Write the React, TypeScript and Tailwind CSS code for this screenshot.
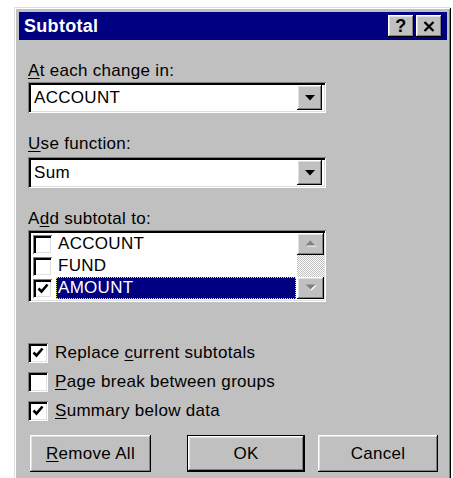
import React from "react";

// Win95-style bevels
const raised =
  "shadow-[inset_-1px_-1px_#000,inset_1px_1px_#fff,inset_-2px_-2px_#808080,inset_2px_2px_#dfdfdf]";
const sunken =
  "shadow-[inset_1px_1px_#808080,inset_-1px_-1px_#fff,inset_3px_3px_#000,inset_-2px_-2px_#dfdfdf]";

function Key({ children }: { children: React.ReactNode }) {
  return <span className="underline underline-offset-2 decoration-1">{children}</span>;
}

function Check({ checked, size }: { checked: boolean; size: string }) {
  return (
    <div className={`${size} shrink-0 bg-white ${sunken} flex items-center justify-center`}>
      {checked && (
        <svg width="12" height="11" viewBox="0 0 12 11">
          <path d="M1.5 5.5 L4.5 8.5 L10.5 1.5" fill="none" stroke="#000" strokeWidth="2.6" />
        </svg>
      )}
    </div>
  );
}

function Combo({ value }: { value: string }) {
  return (
    <div className={`h-[31px] w-[298px] bg-white ${sunken} flex items-center pl-[6px] pr-[4px]`}>
      <span className="flex-1">{value}</span>
      <div className={`h-[25px] w-[25px] bg-[#c0c0c0] ${raised} flex items-center justify-center`}>
        <svg width="10" height="6" viewBox="0 0 10 6">
          <polygon points="0,0 10,0 5,5.5" fill="#000" />
        </svg>
      </div>
    </div>
  );
}

function ScrollArrow({ up }: { up: boolean }) {
  return (
    <div className={`h-[22px] w-[27px] bg-[#c0c0c0] ${raised} flex items-center justify-center`}>
      <svg width="12" height="8" viewBox="0 0 12 8">
        {up ? (
          <>
            <polygon points="1.5,6.5 11.5,6.5 6.5,1.5" fill="#fff" />
            <polygon points="0.5,5.5 10.5,5.5 5.5,0.5" fill="#808080" />
          </>
        ) : (
          <>
            <polygon points="1.5,1.5 11.5,1.5 6.5,6.5" fill="#fff" />
            <polygon points="0.5,0.5 10.5,0.5 5.5,5.5" fill="#808080" />
          </>
        )}
      </svg>
    </div>
  );
}

const fields = [
  { name: "ACCOUNT", checked: false },
  { name: "FUND", checked: false },
  { name: "AMOUNT", checked: true },
];

export default function App() {
  return (
    <div className="h-[478px] w-[453px] overflow-hidden bg-white pl-[14px] pt-[7px] font-['Liberation_Sans',Arial,sans-serif] text-[17px] leading-[20px] tracking-[0.3px] text-black">
      <div className="h-[490px] w-[437px] bg-[#c0c0c0] pt-[5px] pl-[5px] pr-[4px] shadow-[inset_1px_1px_#dfdfdf,inset_-1px_-1px_#000,inset_2px_2px_#fff,inset_-2px_-2px_#808080]">
        {/* title bar */}
        <div className="h-[28px] bg-[#000080] flex items-center pl-[5px] pr-[5px]">
          <span className="flex-1 text-white font-bold text-[18px]">Subtotal</span>
          <div className={`h-[22px] w-[26px] bg-[#c0c0c0] ${raised} flex items-center justify-center font-bold text-[18px]`}>
            ?
          </div>
          <div className={`ml-[2px] h-[22px] w-[26px] bg-[#c0c0c0] ${raised} flex items-center justify-center`}>
            <svg width="12" height="11" viewBox="0 0 12 11">
              <path d="M1.5 1 L10.5 10 M10.5 1 L1.5 10" stroke="#000" strokeWidth="2.2" />
            </svg>
          </div>
        </div>

        <div className="pl-[9px] flex flex-col">
          <div className="mt-[21px]">
            <Key>A</Key>t each change in:
          </div>
          <div className="mt-[1px]">
            <Combo value="ACCOUNT" />
          </div>

          <div className="mt-[21px]">
            <Key>U</Key>se function:
          </div>
          <div className="mt-[3px]">
            <Combo value="Sum" />
          </div>

          <div className="mt-[21px]">
            A<Key>d</Key>d subtotal to:
          </div>
          <div className={`mt-[1px] h-[72px] w-[298px] bg-white ${sunken} flex py-[3px] pl-[3px] pr-[2px]`}>
            <div className="flex-1 flex flex-col">
              {fields.map((f) => (
                <div key={f.name} className="h-[22px] flex items-center">
                  <div className="ml-[2px]">
                    <Check checked={f.checked} size="h-[19px] w-[19px]" />
                  </div>
                  {f.checked ? (
                    <span className="ml-[4px] mr-[1px] h-[22px] flex-1 flex items-center pl-[1px] bg-[#000080] text-white border border-dotted border-[#e8e060]">
                      {f.name}
                    </span>
                  ) : (
                    <span className="ml-[6px]">{f.name}</span>
                  )}
                </div>
              ))}
            </div>
            <div className="w-[27px] flex flex-col">
              <ScrollArrow up />
              <div className="h-[22px] bg-[repeating-conic-gradient(#fff_0_25%,#c0c0c0_0_50%)] bg-[length:2px_2px]" />
              <ScrollArrow up={false} />
            </div>
          </div>

          <div className="mt-[36px] flex flex-col">
            <div className="h-[29px] flex items-center gap-[7px]">
              <Check checked size="h-[20px] w-[20px]" />
              <span>
                Replace <Key>c</Key>urrent subtotals
              </span>
            </div>
            <div className="h-[29px] flex items-center gap-[7px]">
              <Check checked={false} size="h-[20px] w-[20px]" />
              <span>
                <Key>P</Key>age break between groups
              </span>
            </div>
            <div className="h-[29px] flex items-center gap-[7px]">
              <Check checked size="h-[20px] w-[20px]" />
              <span>
                <Key>S</Key>ummary below data
              </span>
            </div>
          </div>

          <div className="mt-[10px] flex">
            <button className={`ml-[2px] h-[37px] w-[121px] bg-[#c0c0c0] ${raised}`}>
              <Key>R</Key>emove All
            </button>
            <button className="ml-[36px] h-[37px] w-[118px] bg-[#c0c0c0] shadow-[inset_0_0_0_1px_#000,inset_-2px_-2px_#000,inset_2px_2px_#fff,inset_-3px_-3px_#808080,inset_3px_3px_#dfdfdf]">
              OK
            </button>
            <button className={`ml-[13px] h-[37px] w-[120px] bg-[#c0c0c0] ${raised}`}>
              Cancel
            </button>
          </div>
        </div>
      </div>
    </div>
  );
}
